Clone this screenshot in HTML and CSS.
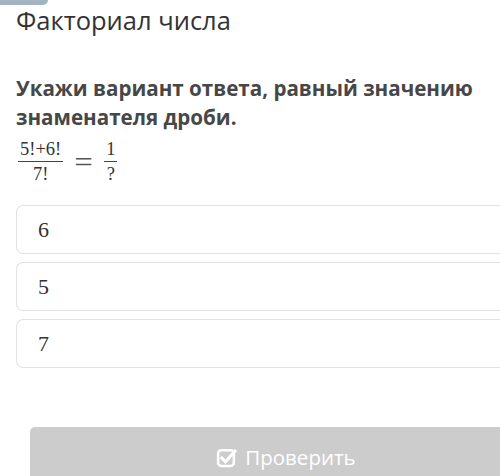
FILE: index.html
```html
<!DOCTYPE html>
<html lang="ru">
<head>
<meta charset="utf-8">
<link rel="stylesheet" href="styles.css">
</head>
<body>
<div class="tab"></div>
<div class="page">
  <h1 class="title">Факториал числа</h1>
  <p class="question">Укажи вариант ответа, равный значению знаменателя дроби.</p>
  <div class="formula">
    <span class="frac">
      <span class="num">5!+6!</span>
      <span class="den">7!</span>
    </span>
    <span class="eq">=</span>
    <span class="frac small">
      <span class="num">1</span>
      <span class="den">?</span>
    </span>
  </div>
  <div class="options">
    <div class="option">6</div>
    <div class="option">5</div>
    <div class="option">7</div>
  </div>
  <div class="actions">
    <button class="check">
      <svg class="icon" viewBox="0 0 20 20" width="21" height="21">
        <rect x="2" y="3" width="15" height="15" rx="3" fill="none" stroke="#fff" stroke-width="2.4"/>
        <path d="M5.5 10.5 L9 14 L18 4" fill="none" stroke="#fff" stroke-width="3" stroke-linecap="square"/>
      </svg>
      <span>Проверить</span>
    </button>
  </div>
</div>
</body>
</html>
```
FILE: styles.css
```css
html, body {
  margin: 0;
  padding: 0;
  background: #fff;
  overflow: hidden;
}
body {
  width: 500px;
  height: 476px;
  position: relative;
  font-family: "Open Sans", "Liberation Sans", sans-serif;
}
.tab {
  position: absolute;
  left: 0;
  top: 0;
  width: 48px;
  height: 5px;
  background: #a3b3c2;
  border-radius: 0 0 5px 0;
}
.page {
  padding: 3px 0 0 16px;
}
.title {
  margin: 0;
  font-weight: 400;
  font-size: 25.5px;
  line-height: 34px;
  color: #333;
}
.question {
  margin: 37px 0 0 0;
  font-weight: 700;
  font-size: 20.6px;
  line-height: 29px;
  color: #474747;
  width: 480px;
}
.formula {
  display: flex;
  align-items: center;
  margin: 8px 0 0 2px;
  font-family: "Liberation Serif", serif;
  color: #333;
  height: 44px;
}
.frac {
  display: inline-flex;
  flex-direction: column;
  align-items: center;
  font-size: 18.5px;
  line-height: 19px;
}
.frac .num {
  padding: 0 2px 2px;
  border-bottom: 1.5px solid #444;
}
.frac .den {
  padding-top: 3px;
}
.eq {
  font-size: 30px;
  margin: 0 12px 0 12px;
  color: #555;
  transform: scaleX(1.1);
}
.options {
  margin-top: 21px;
  display: flex;
  flex-direction: column;
  gap: 8px;
}
.option {
  height: 49px;
  box-sizing: border-box;
  width: 484px;
  border: 1.5px solid #e2e2e2;
  border-right: none;
  border-radius: 7px 0 0 7px;
  padding: 0 0 0 21px;
  display: flex;
  align-items: center;
  font-family: "Liberation Serif", serif;
  font-size: 22px;
  color: #333;
}
.actions {
  margin-top: 59px;
  padding-left: 14px;
}
.check {
  width: 470px;
  height: 60px;
  border: none;
  border-radius: 5px 0 0 0;
  background: #cccccc;
  color: #fff;
  font-family: "Open Sans", "Liberation Sans", sans-serif;
  font-size: 20.5px;
  display: flex;
  align-items: flex-start;
  justify-content: center;
  padding: 16px 0 0 42px;
  gap: 8px;
  box-sizing: border-box;
  margin: 0;
}
.icon {
  margin-top: 4px;
}
```
